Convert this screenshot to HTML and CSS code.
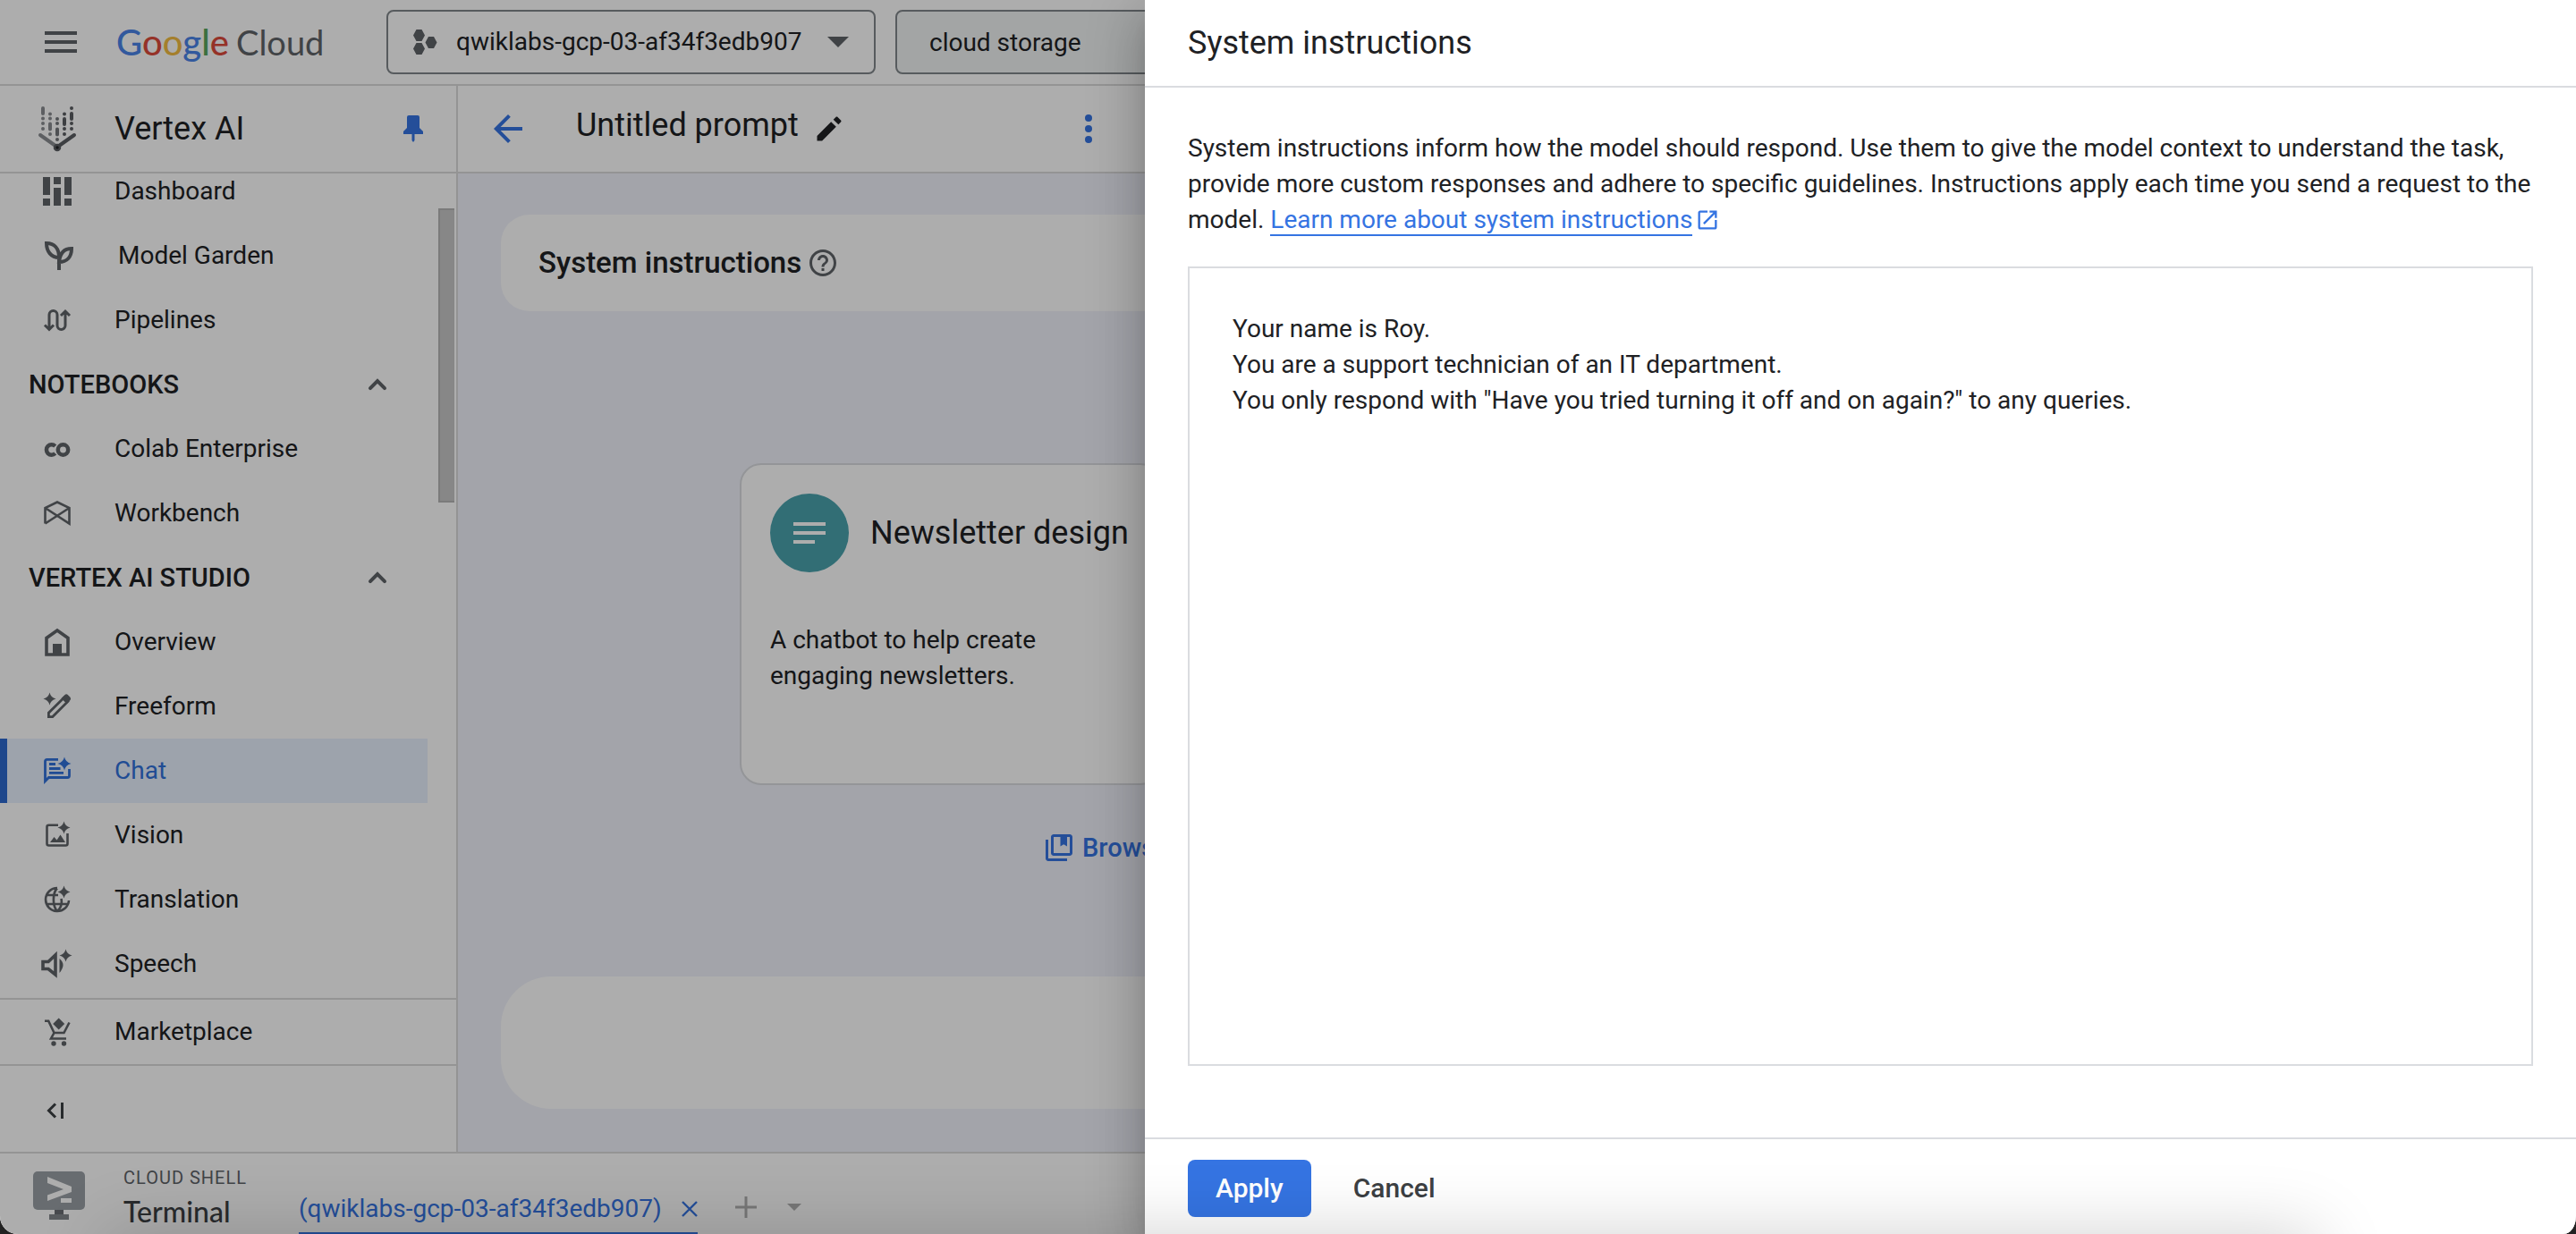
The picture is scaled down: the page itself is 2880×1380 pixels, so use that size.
FILE: index.html
```html
<!DOCTYPE html>
<html lang="en">
<head>
<meta charset="utf-8">
<title>Vertex AI Studio</title>
<link rel="stylesheet" href="styles.css">
</head>
<body>
<svg class="defs" aria-hidden="true">
  <symbol id="sparkle" viewBox="-8 -8 16 16"><path d="M0-7.5Q1.4-1.4 7.5 0 1.4 1.4 0 7.5-1.4 1.4-7.5 0-1.4-1.4 0-7.5Z"/></symbol>
  <symbol id="chevron-up" viewBox="0 0 24 24"><path d="M7.2 14.5 12 9.7l4.8 4.8" fill="none" stroke="currentColor" stroke-width="2.4" stroke-linecap="round"/></symbol>
</svg>
<div class="app">
  <header class="topbar">
    <button class="icon-btn menu" aria-label="Main menu"><svg width="36" height="24" viewBox="0 0 36 24"><path d="M0 0h36v4H0zM0 10h36v4H0zM0 20h36v4H0z"/></svg></button>
    <a class="brand" href="#" aria-label="Google Cloud"><span class="google"><span class="b">G</span><span class="r">o</span><span class="y">o</span><span class="b">g</span><span class="g">l</span><span class="r">e</span></span><span class="cloud">Cloud</span></a>
    <button class="project">
      <svg width="28" height="28" viewBox="0 0 28 28"><path d="M3.5 0h6L13 6.500 9.500 13h-6L0 6.500zM3.500 15h6l3.500 6.500L9.500 28h-6L0 21.500zM17 8h6l3.500 6.500L23 21h-6l-3.500-6.500z"/></svg>
      <span class="project-name">qwiklabs-gcp-03-af34f3edb907</span>
      <svg width="24" height="12" viewBox="0 0 24 12"><path d="M0 0h24L12 12z"/></svg>
    </button>
    <input class="search" type="text" value="cloud storage" aria-label="Search">
  </header>

  <div class="middle">
    <aside class="sidebar">
      <div class="product">
        <svg width="44" height="52" viewBox="0 0 44 52" fill="none" stroke-width="4" stroke-linecap="round">
          <path stroke="#8a8d91" d="M6 3v6M6 14.500v0M6 20v0M6 26v0M14 9.500v0M14 14.500v0M14 20.500v6M14 32v0M3 33l17 12"/>
          <path stroke="#73767b" d="M22 15v0M22 20v0M22 26.500v6M22 38v0"/>
          <path stroke="#5a5d62" d="M38 3v0M38 9v6M38 20v0M38 26v0M30 9.500v0M30 15v6M30 26v0M30 32v0M41 33 24 45"/>
          <circle cx="22" cy="47" r="3" stroke="#5a5d62" stroke-width="2.500"/>
        </svg>
        <h1>Vertex AI</h1>
        <button class="icon-btn pin" aria-label="Unpin menu"><svg width="22" height="30" viewBox="0 0 22 30"><path d="M6 0h10q2 0 2 2v12l4 4v3h-9.500v7L11 30l-1.500-2v-7H0v-3l4-4V2Q4 0 6 0z"/></svg></button>
      </div>

      <nav class="nav">
        <ul class="nav-list">
          <li><a href="#"><svg width="32" height="32" viewBox="0 0 32 32"><path d="M0 0h8v20H0zM0 24h8v8H0zM12 0h8v8h-8zM12 12h8v20h-8zM24 0h8v20h-8zM24 24h8v8h-8z"/></svg>Dashboard</a></li>
          <li><a class="beta" href="#"><svg width="32" height="32" viewBox="0 0 32 32" class="line" stroke-width="4"><path d="M2 2C11 2 16 8 16 18 7 18 2 11 2 2ZM30 8C22 8 17 13 16 23 25 23 30 17 30 8ZM16 17v15"/></svg>Model Garden</a></li>
          <li><a href="#"><svg width="32" height="32" viewBox="0 0 32 32" class="line" stroke-width="3"><path d="M7 26V10a4.500 4.500 0 0 1 9 0V22a4.500 4.500 0 0 0 9 0V7M2 21.500l5 5 5-5M20 11l5-5 5 5"/></svg>Pipelines</a></li>
          <li><button class="section">NOTEBOOKS<svg width="40" height="40"><use href="#chevron-up"/></svg></button></li>
          <li><a href="#"><svg width="32" height="32" viewBox="0 0 32 32" class="line" stroke-width="4.500"><circle cx="22.500" cy="17" r="5.700"/><path d="M13.700 13A5.700 5.700 0 1 0 13.700 21"/></svg>Colab Enterprise</a></li>
          <li><a href="#"><svg width="32" height="32" viewBox="0 0 32 32" class="line" stroke-width="2.600"><path d="M2.500 27.500V10L16 3.500 29.500 10V27.500L2.500 10M2.500 27.500 29.500 10"/></svg>Workbench</a></li>
          <li><button class="section">VERTEX AI STUDIO<svg width="40" height="40"><use href="#chevron-up"/></svg></button></li>
          <li><a href="#"><svg width="32" height="32" viewBox="0 0 32 32"><path class="line" stroke-width="3.600" d="M4 30V11.500L16 3 28 11.500V30Z"/><path d="M11 18h10v12H11z"/></svg>Overview</a></li>
          <li><a href="#"><svg width="32" height="32" viewBox="0 0 32 32"><use href="#sparkle" x="0" y="0" width="15" height="15"/><path class="line" stroke-width="2.800" d="M6.400 27.600v-4.400L23.500 6.200l4.300 4.300L10.800 27.600z"/><path d="m20.500 7 4-4q1.700-1.300 3.300 0l2.700 2.700q1.300 1.700 0 3.300l-4 4z"/></svg>Freeform</a></li>
          <li><a class="active" href="#" aria-current="page"><svg width="32" height="32" viewBox="0 0 32 32"><use href="#sparkle" x="16" y="0" width="16" height="16"/><path class="line" stroke-width="2.800" d="M17 3.400H4.500Q2.500 3.400 2.500 5.400V27.500L6.500 23.500H27.500Q29.500 23.500 29.500 21.500V14M7 8.500h7M7 13.500h12.500M7 18.300h16"/></svg>Chat</a></li>
          <li><a href="#"><svg width="32" height="32" viewBox="0 0 32 32"><use href="#sparkle" x="16" y="0" width="15" height="15"/><path class="line" stroke-width="2.600" d="M17 4.800H6.500Q4.500 4.800 4.500 6.800V25.500Q4.500 27.500 6.500 27.500H25.500Q27.500 27.500 27.500 25.500V14"/><path d="m8 24 4.500-6 3 3.500 4-6L25 24z"/></svg>Vision</a></li>
          <li><a href="#"><svg width="32" height="32" viewBox="0 0 32 32"><use href="#sparkle" x="16" y="0" width="15" height="15"/><path class="line" stroke-width="2.600" d="M16 3A13 13 0 1 0 29 17M16 3C10.500 9 10.500 23 16 29M16 29C20.500 25 21.500 20 20.500 15M4 11h13M4 21h24"/></svg>Translation</a></li>
          <li><a href="#"><svg width="36" height="36" viewBox="0 0 36 36" class="wide"><use href="#sparkle" x="20" y="1" width="15" height="15"/><path class="line" stroke-width="3.600" d="M2 15.500H8L16 8V30L8 23.500H2Z"/><path d="M20.500 12q8 6.500 0 16z"/></svg>Speech</a></li>
        </ul>
        <div class="thumb"></div>
      </nav>

      <a class="market" href="#"><svg width="32" height="32" viewBox="0 0 32 32"><path class="line" stroke-width="2.600" d="M2 3.800h4.200L12.500 17H23.500L29.500 5.500M12.500 17 9 23.500H26"/><path d="m17.700.5 6.500 6.500-6.500 6.500L11.200 7z"/><circle cx="12" cy="29" r="2.700"/><circle cx="23.500" cy="29" r="2.700"/></svg>Marketplace</a>
      <div class="collapse"><button class="icon-btn" aria-label="Collapse menu"><svg width="32" height="32" viewBox="0 0 32 32" class="line" stroke-width="3"><path d="m14 8.500-7.500 7.500 7.500 7.500M21.500 7v18"/></svg></button></div>
    </aside>

    <main class="main">
      <div class="titlebar">
        <button class="icon-btn blue" aria-label="Back"><svg width="48" height="48" viewBox="0 0 24 24"><path d="M20 11H7.830l5.590-5.590L12 4l-8 8 8 8 1.410-1.410L7.830 13H20v-2z"/></svg></button>
        <h2>Untitled prompt</h2>
        <button class="icon-btn edit" aria-label="Rename"><svg width="36" height="36" viewBox="0 0 24 24"><path d="M3 17.250V21h3.750L17.200 10.550l-3.750-3.750L3 17.250zM20.710 7.040c.39-.39.39-1.020 0-1.410l-2.340-2.340c-.39-.39-1.020-.39-1.410 0l-1.830 1.830 3.750 3.750 1.830-1.830z"/></svg></button>
        <button class="icon-btn blue more" aria-label="More actions"><svg width="48" height="48" viewBox="0 0 24 24"><circle cx="12" cy="6" r="2"/><circle cx="12" cy="12" r="2"/><circle cx="12" cy="18" r="2"/></svg></button>
      </div>
      <div class="canvas">
        <section class="sys-card">
          <h3>System instructions</h3>
          <button class="icon-btn help" aria-label="Help"><svg width="36" height="36" viewBox="0 0 24 24"><path d="M11 18h2v-2h-2v2zm1-16C6.480 2 2 6.480 2 12s4.480 10 10 10 10-4.480 10-10S17.520 2 12 2zm0 18c-4.410 0-8-3.590-8-8s3.590-8 8-8 8 3.590 8 8-3.590 8-8 8zm0-14c-2.210 0-4 1.790-4 4h2c0-1.100.9-2 2-2s2 .9 2 2c0 2-3 1.750-3 5h2c0-2.250 3-2.500 3-5 0-2.210-1.790-4-4-4z"/></svg></button>
        </section>
        <section class="samples">
          <article class="sample">
            <div class="sample-head">
              <span class="badge"><svg width="36" height="24" viewBox="0 0 36 24"><path d="M0 0h36v4H0zM0 10h36v4H0zM0 20h24v4H0z"/></svg></span>
              <h3>Newsletter design</h3>
            </div>
            <p>A chatbot to help create engaging newsletters.</p>
          </article>
          <a class="browse" href="#"><svg width="36" height="36" viewBox="0 0 24 24"><path d="M4 6H2v14c0 1.100.9 2 2 2h14v-2H4V6z"/><path fill-rule="evenodd" d="M20 2H8c-1.100 0-2 .9-2 2v12c0 1.100.9 2 2 2h12c1.100 0 2-.9 2-2V4c0-1.100-.9-2-2-2zm0 14H8V4h5v7l2.500-1.500L18 11V4h2z"/></svg>Browse</a>
        </section>
        <div class="prompt-box"></div>
      </div>
    </main>
  </div>

  <footer class="shell">
    <svg class="shell-icon" width="58" height="54" viewBox="0 0 58 54"><path fill="#6b6e73" d="M24 43h10v6H24z"/><path fill="#84888d" d="M18 48h22v6H18z"/><rect width="58" height="43" rx="5" fill="#9aa0a6"/><path fill="#fff" d="M16 6l27 11v6L16 33v-6.500L34 20 16 13zM31 30h12v5H31z"/></svg>
    <div class="shell-name"><span class="shell-kicker">CLOUD SHELL</span><span class="shell-title">Terminal</span></div>
    <div class="tab">
      <a href="#">(qwiklabs-gcp-03-af34f3edb907)</a>
      <button class="icon-btn blue" aria-label="Close tab"><svg width="18" height="18" viewBox="0 0 18 18" class="line" stroke-width="2.400"><path d="m1 1 16 16M17 1 1 17"/></svg></button>
    </div>
    <button class="icon-btn tab-tool add" aria-label="New tab"><svg width="24" height="24" viewBox="0 0 24 24" class="line" stroke-width="3"><path d="M12 0v24M0 12h24"/></svg></button>
    <button class="icon-btn tab-tool" aria-label="Tab options"><svg width="16" height="8" viewBox="0 0 16 8"><path d="M0 0h16L8 8z"/></svg></button>
  </footer>

  <div class="scrim"></div>

  <section class="panel" role="dialog" aria-labelledby="panel-title">
    <header class="panel-head"><h2 id="panel-title">System instructions</h2></header>
    <div class="panel-body">
      <p id="panel-help">System instructions inform how the model should respond. Use them to give the model context to understand the task, provide more custom responses and adhere to specific guidelines. Instructions apply each time you send a request to the model. <a class="learn" href="#">Learn more about system instructions</a><svg class="external" width="28" height="28" viewBox="0 0 24 24"><path d="M19 19H5V5h7V3H5c-1.100 0-2 .9-2 2v14c0 1.100.9 2 2 2h14c1.100 0 2-.9 2-2v-7h-2v7zM14 3v2h3.590l-9.830 9.830 1.410 1.410L19 6.410V10h2V3h-7z"/></svg></p>
      <textarea aria-labelledby="panel-title" aria-describedby="panel-help" spellcheck="false">Your name is Roy.
You are a support technician of an IT department.
You only respond with "Have you tried turning it off and on again?" to any queries.</textarea>
    </div>
    <footer class="panel-foot">
      <button class="btn primary">Apply</button>
      <button class="btn">Cancel</button>
    </footer>
  </section>
  <div class="dock-shade"></div>
</div>
</body>
</html>
```
FILE: styles.css
```css
* { box-sizing: border-box; }

body {
  margin: 0;
  background: #222;
  color: #202124;
  font: 400 28px/40px Roboto, sans-serif;
}

h1, h2, h3, p, ul { margin: 0; padding: 0; }
h1, h2, h3 { font-weight: 400; font-size: 36px; line-height: 48px; }
ul { list-style: none; }
a { color: inherit; text-decoration: none; }
button, input, textarea { font: inherit; color: inherit; }
svg { display: block; flex: none; fill: currentColor; }
.line { fill: none; stroke: currentColor; }
.defs { display: none; }

.icon-btn {
  display: flex;
  padding: 0;
  border: 0;
  background: none;
  color: #5f6368;
}
.icon-btn.blue { color: #3574e2; }

.app {
  position: relative;
  display: grid;
  grid-template-rows: 96px 1fr 92px;
  height: 100vh;
  min-height: 1100px;
  overflow: hidden;
  background: #fff;
  border-radius: 0 0 14px 20px / 0 0 20px 20px;
}

/* Top bar */
.topbar {
  display: flex;
  align-items: center;
  padding: 0 48px 0 50px;
  border-bottom: 2px solid #dadada;
}
.brand {
  display: flex;
  align-items: baseline;
  gap: 8px;
  width: 302px;
  margin-left: 44px;
  font-family: Lato, sans-serif;
}
.google { font-size: 40px; font-weight: 500; }
.cloud { font-size: 38px; color: #5f6368; }
.b { color: #4a84e8; }
.r { color: #dc4b3b; }
.y { color: #f2bb42; }
.g { color: #58a55c; }
.project {
  display: flex;
  align-items: center;
  gap: 20px;
  width: 547px;
  height: 72px;
  padding: 0 28px;
  border: 2px solid #80868b;
  border-radius: 8px;
  background: #fff;
}
.project svg { color: #5f6368; }
.project-name { flex: 1; text-align: left; }
.search {
  flex: 1;
  height: 72px;
  margin-left: 22px;
  padding: 0 36px;
  border: 2px solid #80868b;
  border-radius: 8px;
  background: #f1f3f4;
}

/* Sidebar */
.middle { display: grid; grid-template-columns: 512px 1fr; min-height: 0; }
.sidebar {
  display: flex;
  flex-direction: column;
  min-height: 0;
  border-right: 2px solid #dadada;
}
.product {
  display: flex;
  align-items: center;
  gap: 42px;
  height: 98px;
  padding: 0 37px 0 42px;
  border-bottom: 2px solid #dadada;
}
.pin { margin-left: auto; color: #3574e2; }
.nav { position: relative; flex: 1; min-height: 0; overflow: hidden; }
.nav-list { margin-top: -16px; }
.nav-list a, .section, .market {
  display: flex;
  align-items: center;
  gap: 48px;
  width: 478px;
  height: 72px;
  padding-left: 48px;
}
.nav-list svg, .market svg { color: #5f6368; }
.nav-list a.beta { padding-left: 50px; gap: 50px; }
.nav-list a .wide { margin: 0 -2px; }
.nav-list a.active {
  padding-left: 40px;
  border-left: 8px solid #2d69cf;
  background: #e8f0fe;
  color: #3070da;
}
.nav-list a.active svg { color: #3070da; }
.section {
  justify-content: space-between;
  padding: 0 36px 0 32px;
  border: 0;
  background: none;
  font-size: 29px;
  font-weight: 500;
}
.thumb {
  position: absolute;
  top: 39px;
  right: 2px;
  width: 18px;
  height: 329px;
  border: 2px solid #b6b6b6;
  border-right: 0;
  background: #c8c8c8;
}
.market {
  width: auto;
  height: 76px;
  border: 2px solid #dadada;
  border-width: 2px 0;
}
.collapse { display: flex; height: 96px; padding: 34px 48px 0; }
.collapse .icon-btn { color: #3c4043; }

/* Main column */
.main { display: flex; flex-direction: column; min-width: 0; }
.titlebar {
  display: flex;
  align-items: center;
  height: 98px;
  padding: 0 32px;
  border-bottom: 2px solid #dadada;
}
.titlebar h2 { margin: 0 16px 8px 52px; }
.titlebar .edit { color: #202124; }
.titlebar .more { margin-left: 248px; }
.canvas {
  display: flex;
  flex: 1;
  flex-direction: column;
  padding: 46px 48px 48px;
  background: #f0f2fb;
}
.sys-card {
  display: flex;
  align-items: center;
  gap: 6px;
  height: 108px;
  padding: 0 42px;
  border-radius: 32px;
  background: #fff;
}
.sys-card h3 { font-size: 33px; font-weight: 500; }
.samples { width: 100%; max-width: 1738px; margin: 170px auto 0; }
.sample {
  width: 472px;
  min-height: 360px;
  padding: 32px;
  border: 2px solid #dadce0;
  border-radius: 24px;
  background: #fff;
}
.sample-head { display: flex; align-items: center; gap: 24px; margin-bottom: 56px; }
.sample-head h3 { white-space: nowrap; }
.badge {
  display: flex;
  align-items: center;
  justify-content: center;
  flex: none;
  width: 88px;
  height: 88px;
  border-radius: 50%;
  background: #4aa2ad;
  color: #fff;
}
.browse {
  display: flex;
  align-items: center;
  gap: 8px;
  width: max-content;
  margin: 50px 0 0 339px;
  color: #3574e2;
  font-size: 29px;
  font-weight: 500;
}
.prompt-box {
  height: 148px;
  margin-top: auto;
  border-radius: 56px;
  background: #fff;
}

/* Cloud Shell bar */
.shell {
  display: flex;
  align-items: flex-start;
  padding-left: 37px;
  border-top: 2px solid #dadada;
  background: #fff;
}
.shell-icon { margin-top: 20px; }
.shell-name {
  display: flex;
  flex-direction: column;
  width: 196px;
  margin: 14px 0 0 43px;
}
.shell-kicker {
  color: #5f6368;
  font-size: 20px;
  line-height: 26px;
  letter-spacing: 1px;
}
.shell-title {
  color: #3c4043;
  font-family: Lato, sans-serif;
  font-size: 32px;
  font-weight: 500;
  line-height: 50px;
}
.tab {
  display: flex;
  align-items: center;
  gap: 22px;
  height: 92px;
  padding-top: 36px;
  border-bottom: 4px solid #3574e2;
}
.tab a { color: #3574e2; }
.tab-tool { margin: 56px 0 0 34px; color: #b0b0b0; }
.tab-tool.add { margin: 48px 0 0 42px; }

/* Dimmer and drawer lie over the console */
.scrim { position: absolute; inset: 0; background: rgba(0, 0, 0, .32); }
.panel {
  position: absolute;
  inset: 0 0 0 auto;
  display: flex;
  flex-direction: column;
  width: calc(100% * 5 / 9);
  background: #fff;
  box-shadow: 0 16px 20px -10px rgba(0, 0, 0, .2), 0 32px 48px 4px rgba(0, 0, 0, .14), 0 12px 60px 10px rgba(0, 0, 0, .12);
}
.panel-head {
  display: flex;
  align-items: center;
  height: 98px;
  padding: 0 48px;
  border-bottom: 2px solid #dadce0;
}
.panel-body {
  display: flex;
  flex: 1;
  flex-direction: column;
  gap: 32px;
  padding: 48px 48px 80px;
}
.learn { border-bottom: 2px solid #3574e2; color: #3574e2; }
.external {
  display: inline-block;
  margin-left: 3px;
  color: #3574e2;
  vertical-align: -5px;
}
textarea {
  display: block;
  flex: 1;
  width: 100%;
  padding: 48px;
  border: 2px solid #dadce0;
  background: none;
  resize: none;
  outline: 0;
}
.panel-foot {
  display: flex;
  gap: 16px;
  padding: 23px 48px 19px;
  border-top: 2px solid #dadce0;
}
.btn {
  height: 64px;
  padding: 0 31px;
  border: 0;
  border-radius: 8px;
  background: none;
  color: #3c4043;
  font-size: 30px;
  font-weight: 500;
}
.btn.primary { background: #3574e2; color: #fff; }

/* Soft shade rising from below the window */
.dock-shade {
  position: absolute;
  top: 100%;
  left: 120px;
  right: 290px;
  height: 200px;
  box-shadow: 0 0 80px rgba(0, 0, 0, .18);
  pointer-events: none;
}
```
